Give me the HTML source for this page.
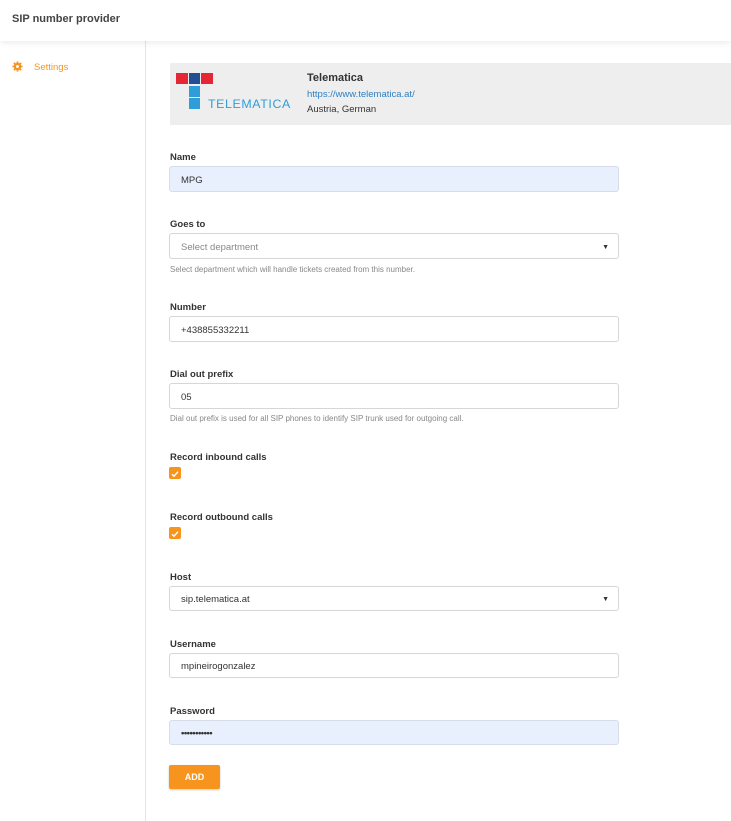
<!DOCTYPE html>
<html><head><style>
*{box-sizing:border-box;margin:0;padding:0}
body{width:731px;height:821px;background:#fff;font-family:"Liberation Sans",sans-serif;color:#333;position:relative;overflow:hidden}
.hdr{position:absolute;left:0;top:0;width:731px;height:41px;background:#fff;box-shadow:0 2px 6px rgba(0,0,0,.08);z-index:2}
.hdr span{position:absolute;left:12px;top:13px;font-size:11px;font-weight:bold;color:#444}
.side{position:absolute;left:0;top:41px;width:146px;height:780px;border-right:1px solid #e4e4e4}
.a{position:absolute}
.lbl{position:absolute;left:170px;font-size:9.5px;font-weight:bold;color:#333}
.inp{position:absolute;left:169px;width:450px;height:26px;border:1px solid #d6d6d6;border-radius:3px;font-size:9.5px;padding:0 0 0 11px;line-height:27px;color:#333;background:#fff}
.fill{background:#e8f0fe;border-color:#d6dce8}
.hint{position:absolute;left:170px;font-size:8px;color:#888}
.cb{position:absolute;left:169px;width:12px;height:12px;border-radius:2px;background:#f7941d}
.arr{position:absolute;right:9px;top:0;font-size:7px;color:#333}
</style></head><body>
<div class="hdr"><span>SIP number provider</span></div>
<div class="side"></div>
<svg class="a" style="left:12px;top:61px" width="11" height="11" viewBox="0 0 12 12"><g fill="#f7941d"><circle cx="6" cy="6" r="4"/><rect x="5" y="0.5" width="2" height="11"/><rect x="0.5" y="5" width="11" height="2"/><rect x="5" y="0.5" width="2" height="11" transform="rotate(45 6 6)"/><rect x="5" y="0.5" width="2" height="11" transform="rotate(-45 6 6)"/></g><circle cx="6" cy="6" r="1.6" fill="#fff"/></svg>
<div class="a" style="left:34px;top:62px;font-size:9.5px;color:#f7941d">Settings</div>
<div class="a" style="left:170px;top:63px;width:561px;height:62px;background:#eee"></div>
<div class="a" style="left:176px;top:73px;width:12px;height:11px;background:#e52634"></div>
<div class="a" style="left:189px;top:73px;width:11px;height:11px;background:#234e93"></div>
<div class="a" style="left:201px;top:73px;width:12px;height:11px;background:#e52634"></div>
<div class="a" style="left:189px;top:86px;width:11px;height:11px;background:#2f9ed8"></div>
<div class="a" style="left:189px;top:98px;width:11px;height:11px;background:#2f9ed8"></div>
<div class="a" style="left:208px;top:97px;font-size:12px;color:#2f9ed8;letter-spacing:0.6px;transform:scaleX(1.03);transform-origin:left">TELEMATICA</div>
<div class="a" style="left:307px;top:72px;font-size:11px;font-weight:bold">Telematica</div>
<div class="a" style="left:307px;top:89px;font-size:9.5px;color:#2f7fc1">https://www.telematica.at/</div>
<div class="a" style="left:307px;top:104px;font-size:9.5px">Austria, German</div>

<div class="lbl" style="top:152px">Name</div>
<div class="inp fill" style="top:166px">MPG</div>
<div class="lbl" style="top:219px">Goes to</div>
<div class="inp" style="top:233px;color:#888">Select department<span class="arr">▼</span></div>
<div class="hint" style="top:265px">Select department which will handle tickets created from this number.</div>
<div class="lbl" style="top:302px">Number</div>
<div class="inp" style="top:316px">+438855332211</div>
<div class="lbl" style="top:369px">Dial out prefix</div>
<div class="inp" style="top:383px">05</div>
<div class="hint" style="top:414px">Dial out prefix is used for all SIP phones to identify SIP trunk used for outgoing call.</div>
<div class="lbl" style="top:452px">Record inbound calls</div>
<div class="cb" style="top:467px"><svg width="12" height="12"><path d="M3 6.2l2 2 4-4.5" stroke="#fff" stroke-width="1.4" fill="none"/></svg></div>
<div class="lbl" style="top:512px">Record outbound calls</div>
<div class="cb" style="top:527px"><svg width="12" height="12"><path d="M3 6.2l2 2 4-4.5" stroke="#fff" stroke-width="1.4" fill="none"/></svg></div>
<div class="lbl" style="top:572px">Host</div>
<div class="inp" style="top:586px;height:25px;line-height:26px">sip.telematica.at<span class="arr">▼</span></div>
<div class="lbl" style="top:639px">Username</div>
<div class="inp" style="top:653px;height:25px;line-height:26px">mpineirogonzalez</div>
<div class="lbl" style="top:706px">Password</div>
<div class="inp fill" style="top:720px;height:25px;line-height:26px;letter-spacing:-0.5px;font-weight:bold">•••••••••••</div>
<div class="a" style="left:169px;top:765px;width:51px;height:24px;background:#f7941d;border-radius:2px;box-shadow:0 1px 2px rgba(0,0,0,.2);color:#fff;font-size:9px;font-weight:bold;text-align:center;line-height:25px">ADD</div>
</body></html>
